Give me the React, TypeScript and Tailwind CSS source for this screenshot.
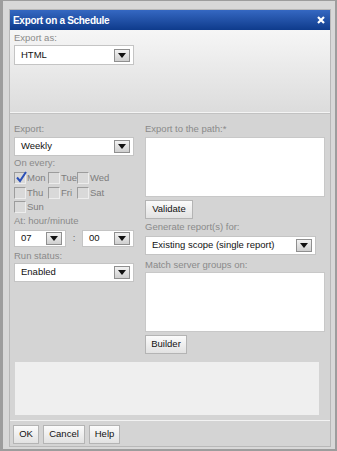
import { ReactNode } from "react";

function Arrow() {
  return (
    <div className="flex h-[13px] w-[16px] items-center justify-center border border-[#8f8f8f] bg-gradient-to-b from-[#f2f2f2] to-[#cfcfcf]">
      <svg width="8" height="5" viewBox="0 0 8 5">
        <path d="M0 0h8L4 5z" fill="#111" />
      </svg>
    </div>
  );
}

function Select({ value, className }: { value: string; className: string }) {
  return (
    <div
      className={`flex items-center justify-between border border-[#c4c4c4] bg-white pl-[6px] pr-[3px] text-[9.5px] text-[#111] ${className}`}
    >
      <span>{value}</span>
      <Arrow />
    </div>
  );
}

function Label({ children }: { children: ReactNode }) {
  return <div className="h-[12px] text-[9.5px] leading-[12px] text-[#8a8a8a]">{children}</div>;
}

function Button({ children, className = "" }: { children: ReactNode; className?: string }) {
  return (
    <div
      className={`flex h-[19px] items-center justify-center border border-[#b4b4b4] bg-gradient-to-b from-[#fbfbfb] to-[#e2e2e2] px-[6px] text-[9.5px] text-[#111] ${className}`}
    >
      {children}
    </div>
  );
}

function Check({ label, checked = false }: { label: string; checked?: boolean }) {
  return (
    <div className="flex h-[14.5px] items-center">
      <div className="relative h-[12px] w-[12px] border border-t-[#9c9c9c] border-l-[#9c9c9c] border-b-[#ededed] border-r-[#ededed] bg-[#d9d9d9]">
        {checked && (
          <svg className="absolute -top-[2px] left-[1px]" width="11" height="12" viewBox="0 0 11 12">
            <path d="M1 6.5l3 3.5L10 1" stroke="#2b50b8" strokeWidth="2" fill="none" />
          </svg>
        )}
      </div>
      <span className="ml-[1px] text-[9.5px] text-[#7d7d7d]">{label}</span>
    </div>
  );
}

export default function App() {
  return (
    <div className="h-[451px] w-[337px] border-l-[3px] border-r-[2px] border-b-[2px] border-t border-[#9d9d9d] bg-[#d8d8d8] pl-[6px] pr-[4px] pt-[8px] pb-[2px] font-['Liberation_Sans',Arial,sans-serif]">
      <div className="flex h-[438px] w-[322px] flex-col border border-[#b8b8b8] bg-[#d4d4d4]">
        {/* title */}
        <div className="flex h-[20px] shrink-0 items-center justify-between bg-gradient-to-b from-[#3568c2] to-[#0e3b8c] pl-[3px] pr-[5px]">
          <span className="text-[10px] font-bold tracking-[-0.3px] text-white">Export on a Schedule</span>
          <svg width="8" height="8" viewBox="0 0 8 8">
            <path d="M1 1l6 6M7 1L1 7" stroke="white" strokeWidth="2.2" />
          </svg>
        </div>

        {/* export as */}
        <div className="h-[83px] shrink-0 border-b border-b-[#f4f4f4] bg-gradient-to-b from-[#f6f6f6] to-[#dcdcdc] px-[4px] pt-[2px]">
          <Label>Export as:</Label>
          <Select value="HTML" className="mt-[1px] h-[20px] w-[120px]" />
        </div>

        {/* main */}
        <div className="flex shrink-0 gap-[11px] border-t border-t-[#c2c2c2] px-[4px] pt-[9px]">
          <div className="flex w-[120px] flex-col">
            <Label>Export:</Label>
            <Select value="Weekly" className="mt-[2px] h-[19px] w-[120px]" />
            <div className="mt-[1px]">
              <Label>On every:</Label>
            </div>
            <div className="mt-[2px] grid grid-cols-[34px_29px_1fr]">
              <Check label="Mon" checked />
              <Check label="Tue" />
              <Check label="Wed" />
              <Check label="Thu" />
              <Check label="Fri" />
              <Check label="Sat" />
              <Check label="Sun" />
            </div>
            <div>
              <Label>At: hour/minute</Label>
            </div>
            <div className="mt-[3px] flex items-center">
              <Select value="07" className="h-[17px] w-[52px]" />
              <span className="w-[16px] text-center text-[9.5px] text-[#666]">:</span>
              <Select value="00" className="h-[17px] w-[52px]" />
            </div>
            <div className="mt-[3px]">
              <Label>Run status:</Label>
            </div>
            <Select value="Enabled" className="mt-[1px] h-[19px] w-[120px]" />
          </div>

          <div className="flex w-[180px] flex-col">
            <Label>Export to the path:*</Label>
            <div className="mt-[2px] h-[60px] w-[180px] border border-[#c8c8c8] bg-white" />
            <Button className="mt-[3px] w-[48px]">Validate</Button>
            <div className="mt-[2px]">
              <Label>Generate report(s) for:</Label>
            </div>
            <Select value="Existing scope (single report)" className="mt-[3px] h-[19px] w-[171px]" />
            <div className="mt-[4px]">
              <Label>Match server groups on:</Label>
            </div>
            <div className="mt-[1px] h-[60px] w-[180px] border border-[#c8c8c8] bg-white" />
            <Button className="mt-[3px] w-[42px] h-[18px]">Builder</Button>
          </div>
        </div>

        <div className="mx-[5px] mt-[8px] h-[53px] w-[304px] bg-[#efefef]" />

        <div className="mt-auto border-t border-t-[#f2f2f2] px-[3px] pt-[4px] pb-[2px]">
          <div className="flex gap-[4px]">
            <Button className="w-[26px] px-0">OK</Button>
            <Button className="w-[42px] px-0">Cancel</Button>
            <Button className="w-[31px] px-0">Help</Button>
          </div>
        </div>
      </div>
    </div>
  );
}
